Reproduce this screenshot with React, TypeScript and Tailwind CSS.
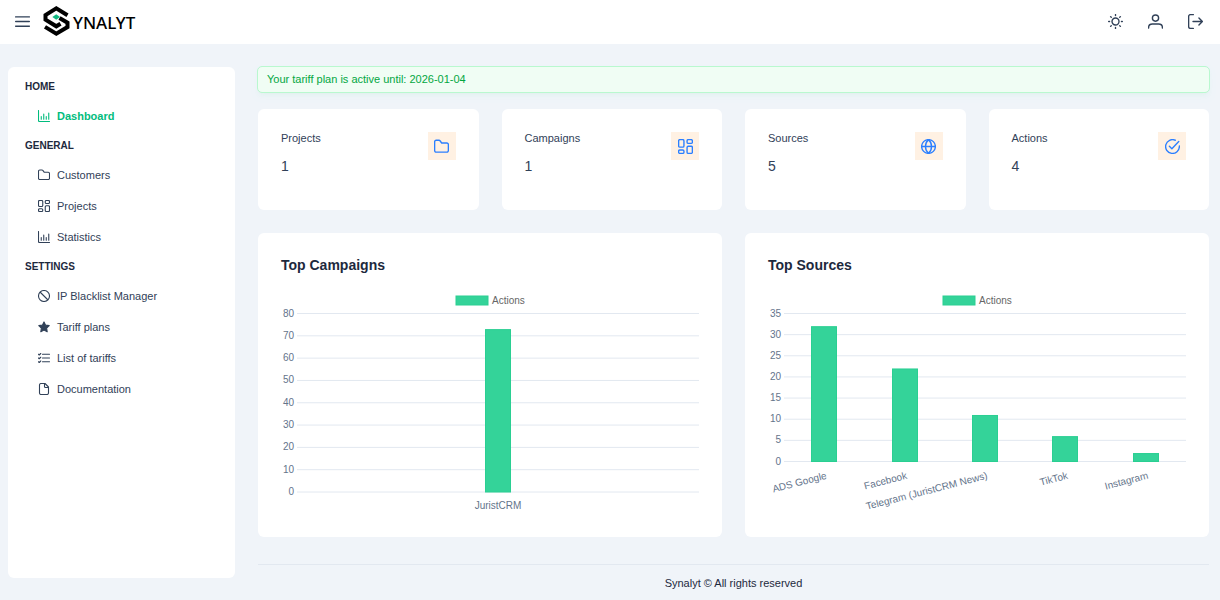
import { useState } from "react";
import type { ReactNode } from "react";

type IconProps = { className?: string };

function Icon({ className = "size-3", children }: IconProps & { children: ReactNode }) {
  return (
    <svg
      viewBox="0 0 24 24"
      className={className}
      fill="none"
      stroke="currentColor"
      strokeWidth={2.2}
      strokeLinecap="round"
      strokeLinejoin="round"
      aria-hidden="true"
    >
      {children}
    </svg>
  );
}

const BarsIcon = (p: IconProps) => (
  <Icon {...p}>
    <path d="M1 4.5h22M1 12h22M1 19.5h22" />
  </Icon>
);
const SunIcon = (p: IconProps) => (
  <Icon {...p}>
    <circle cx="12" cy="12" r="5.6" />
    <path d="M12 1v1.500M12 21.500V23M1 12h1.500M21.500 12H23M4.200 4.200l1 1M18.800 18.800l1 1M4.200 19.800l1-1M18.800 5.200l1-1" />
  </Icon>
);
const UserIcon = (p: IconProps) => (
  <Icon {...p}>
    <circle cx="12" cy="6.5" r="5" />
    <path d="M1 22.500v-1c0-3.600 2.600-5.500 6-5.500h10c3.400 0 6 1.900 6 5.500v1" />
  </Icon>
);
const SignOutIcon = (p: IconProps) => (
  <Icon {...p}>
    <path d="M8.500 1H4a3 3 0 0 0-3 3v16a3 3 0 0 0 3 3h4.500M8 12h15M17.500 6.500 23 12l-5.500 5.500" />
  </Icon>
);
const ChartBarIcon = (p: IconProps) => (
  <Icon {...p}>
    <path d="M1 1v20a2 2 0 0 0 2 2h20M6.500 13v5.500M11.500 8v10.500M16.500 13v5.500M21.500 6v12.500" />
  </Icon>
);
const FolderIcon = (p: IconProps) => (
  <Icon {...p}>
    <path d="M1 18.500v-14A2.500 2.500 0 0 1 3.500 2H8a2 2 0 0 1 1.600.8L12.300 6.400h8.200A2.500 2.500 0 0 1 23 8.900v9.600a2.500 2.500 0 0 1-2.500 2.500h-17A2.500 2.500 0 0 1 1 18.500Z" />
  </Icon>
);
const ObjectsIcon = (p: IconProps) => (
  <Icon {...p}>
    <rect x="1" y="1" width="8.500" height="12" rx="2" />
    <rect x="14.500" y="1" width="8.500" height="6" rx="2" />
    <rect x="1" y="17.500" width="8.500" height="5.500" rx="2" />
    <rect x="14.500" y="11.500" width="8.500" height="11.500" rx="2" />
  </Icon>
);
const BanIcon = (p: IconProps) => (
  <Icon {...p}>
    <circle cx="12" cy="12" r="11" />
    <path d="m4.500 4.500 15 15" />
  </Icon>
);
const StarIcon = (p: IconProps) => (
  <Icon {...p}>
    <path
      fill="currentColor"
      d="m12 1.800 3.200 6.500 7.200 1-5.200 5.100 1.200 7.100L12 18.100l-6.400 3.400 1.200-7.100L1.600 9.300l7.200-1Z"
    />
  </Icon>
);
const ListCheckIcon = (p: IconProps) => (
  <Icon {...p}>
    <path d="M9 4.500h14M9 12h14M9 19.500h14M1 4.500l1.500 1.500L5.500 3M1 12l1.500 1.500 3-3M1 19.500 2.500 21l3-3" />
  </Icon>
);
const FileIcon = (p: IconProps) => (
  <Icon {...p}>
    <path d="M14 1H6a3 3 0 0 0-3 3v16a3 3 0 0 0 3 3h12a3 3 0 0 0 3-3V8ZM13 1v6a2 2 0 0 0 2 2h6" />
  </Icon>
);
const GlobeIcon = (p: IconProps) => (
  <Icon {...p}>
    <circle cx="12" cy="12" r="11" />
    <path d="M1 12h22M12 1c-6.500 6-6.500 16 0 22M12 1c6.500 6 6.500 16 0 22" />
  </Icon>
);
const CheckCircleIcon = (p: IconProps) => (
  <Icon {...p}>
    <path d="M23 11v1A11 11 0 1 1 16.500 2M22 4 11 15.500l-4-4" />
  </Icon>
);

function Logo() {
  return (
    <a href="#home" className="flex items-center gap-[3px] text-black" aria-label="Synalyt">
      <svg viewBox="0 0 27 30" className="h-[30px] w-[27px]" aria-hidden="true">
        <g fill="none" stroke="#000" strokeWidth="4">
          <path d="M24.500 9.300 13.300 2.400 2.500 9v4.600L13.300 20.300l4.200-2.600" />
          <path d="M2 20.900l11.300 6.700 11.200-6.600v-4.300L16.500 12" />
        </g>
        <path d="M13.200 8.300 17 11l-3.800 2.700L9.400 11Z" fill="#10b981" />
      </svg>
      <span className="mt-[3px] font-['Noto_Sans','Open_Sans',sans-serif] text-[17px] leading-6 font-medium">
        YNALYT
      </span>
    </a>
  );
}

type NavItem = { label: string; icon: (p: IconProps) => ReactNode; active?: boolean };

const sections: { title: string; items: NavItem[] }[] = [
  { title: "HOME", items: [{ label: "Dashboard", icon: ChartBarIcon, active: true }] },
  {
    title: "GENERAL",
    items: [
      { label: "Customers", icon: FolderIcon },
      { label: "Projects", icon: ObjectsIcon },
      { label: "Statistics", icon: ChartBarIcon },
    ],
  },
  {
    title: "SETTINGS",
    items: [
      { label: "IP Blacklist Manager", icon: BanIcon },
      { label: "Tariff plans", icon: StarIcon },
      { label: "List of tariffs", icon: ListCheckIcon },
      { label: "Documentation", icon: FileIcon },
    ],
  },
];

const stats = [
  { label: "Projects", value: 1, icon: FolderIcon },
  { label: "Campaigns", value: 1, icon: ObjectsIcon },
  { label: "Sources", value: 5, icon: GlobeIcon },
  { label: "Actions", value: 4, icon: CheckCircleIcon },
];

type ChartProps = {
  title: string;
  data: { name: string; value: number }[];
  max: number;
  step: number;
  bottom: number;
  slanted?: boolean;
};

function BarChart({ title, data, max, step, bottom, slanted }: ChartProps) {
  const top = 23.5;
  const left = 16;
  const right = 418;
  const ticks = Array.from({ length: max / step + 1 }, (_, i) => i * step);
  const y = (v: number) => bottom - (v / max) * (bottom - top);
  const slot = (right - left) / data.length;

  return (
    <section className="rounded-md bg-white p-[23px]">
      <h2 className="text-sm leading-[18px] font-bold">{title}</h2>
      <svg viewBox="0 0 418 224" className="mt-4 w-full text-[10px]" role="img" aria-label={title}>
        <rect x="175" y="6" width="32" height="9" fill="#34d399" stroke="#2acf92" />
        <text x="211" y="13.5" fill="#666666">
          Actions
        </text>
        {ticks.map((t) => (
          <g key={t}>
            <line x1={left} x2={right} y1={y(t)} y2={y(t)} stroke="#e2e8f0" />
            <text x="13" y={y(t) + 3} textAnchor="end" fill="#64748b">
              {t}
            </text>
          </g>
        ))}
        {data.map((d, i) => {
          const cx = left + slot * (i + 0.5);
          return (
            <g key={d.name}>
              <rect
                x={Math.round(cx - 13) + 0.5}
                y={y(d.value) + 0.5}
                width="25"
                height={bottom - y(d.value) - 0.5}
                fill="#34d399"
                stroke="#2acf92"
              />
              {slanted ? (
                <text
                  transform={`translate(${cx + 3} ${bottom + 17}) rotate(-14.5)`}
                  textAnchor="end"
                  fill="#64748b"
                >
                  {d.name}
                </text>
              ) : (
                <text x={cx} y={bottom + 17} textAnchor="middle" fill="#64748b">
                  {d.name}
                </text>
              )}
            </g>
          );
        })}
      </svg>
    </section>
  );
}

export default function App() {
  const [menuOpen, setMenuOpen] = useState(true);

  return (
    <div className="min-h-screen bg-[#f0f4f9] font-['Liberation_Sans',Arial,sans-serif] text-[11px] text-slate-800">
      <header className="flex h-11 items-center justify-between bg-white pr-[17px] pb-0.5 pl-[15px] text-slate-700">
        <div className="flex items-center gap-[13px]">
          <button type="button" aria-label="Toggle menu" onClick={() => setMenuOpen(!menuOpen)}>
            <BarsIcon className="size-[15px]" />
          </button>
          <Logo />
        </div>
        <div className="flex items-center gap-[25px]">
          <button type="button" aria-label="Toggle theme">
            <SunIcon className="size-[15px]" />
          </button>
          <button type="button" aria-label="Profile">
            <UserIcon className="size-[15px]" />
          </button>
          <button type="button" aria-label="Sign out">
            <SignOutIcon className="size-[15px]" />
          </button>
        </div>
      </header>

      <div className="flex items-start gap-[23px] pt-[23px] pr-[11px] pl-2">
        {menuOpen && (
          <nav className="h-[calc(100vh-89px)] w-[227px] shrink-0 overflow-y-auto rounded-md bg-white px-[17px] pt-[5px]">
            {sections.map((s) => (
              <section key={s.title}>
                <h2 className="text-[10px] leading-[29px] font-bold">{s.title}</h2>
                <ul className="flex flex-col gap-px">
                  {s.items.map(({ label, icon: ItemIcon, active }) => (
                    <li key={label}>
                      <a
                        href="#home"
                        className={
                          active
                            ? "flex h-[30px] items-center gap-[7px] pl-[13px] font-bold text-emerald-500"
                            : "flex h-[30px] items-center gap-[7px] pl-[13px] text-slate-700"
                        }
                      >
                        <ItemIcon />
                        {label}
                      </a>
                    </li>
                  ))}
                </ul>
              </section>
            ))}
          </nav>
        )}

        <div className="min-w-0 flex-1">
          <main className="flex flex-col gap-[23px]">
            <div>
              <p
                role="status"
                className="mb-[17px] rounded-sm bg-green-50 px-[9px] leading-[25px] text-green-600 shadow-md shadow-green-500/5 outline outline-green-200"
              >
                Your tariff plan is active until: 2026-01-04
              </p>
              <div className="grid grid-cols-4 gap-[23px]">
                {stats.map(({ label, value, icon: StatIcon }) => (
                  <section
                    key={label}
                    className="flex h-[101px] items-start justify-between rounded-md bg-white p-[23px] text-slate-700"
                  >
                    <div>
                      <h2 className="leading-3">{label}</h2>
                      <p className="mt-3.5 text-sm leading-4">{value}</p>
                    </div>
                    <span className="flex size-7 items-center justify-center bg-[#fff1e3] text-blue-500">
                      <StatIcon className="size-[15px]" />
                    </span>
                  </section>
                ))}
              </div>
            </div>

            <div className="grid grid-cols-2 gap-[23px]">
              <BarChart
                title="Top Campaigns"
                data={[{ name: "JuristCRM", value: 73 }]}
                max={80}
                step={10}
                bottom={202}
              />
              <BarChart
                title="Top Sources"
                data={[
                  { name: "ADS Google", value: 32 },
                  { name: "Facebook", value: 22 },
                  { name: "Telegram (JuristCRM News)", value: 11 },
                  { name: "TikTok", value: 6 },
                  { name: "Instagram", value: 2 },
                ]}
                max={35}
                step={5}
                bottom={171.5}
                slanted
              />
            </div>
          </main>
          <footer className="mt-[27px] border-t border-slate-200 text-center leading-9">
            Synalyt © All rights reserved
          </footer>
        </div>
      </div>
    </div>
  );
}
